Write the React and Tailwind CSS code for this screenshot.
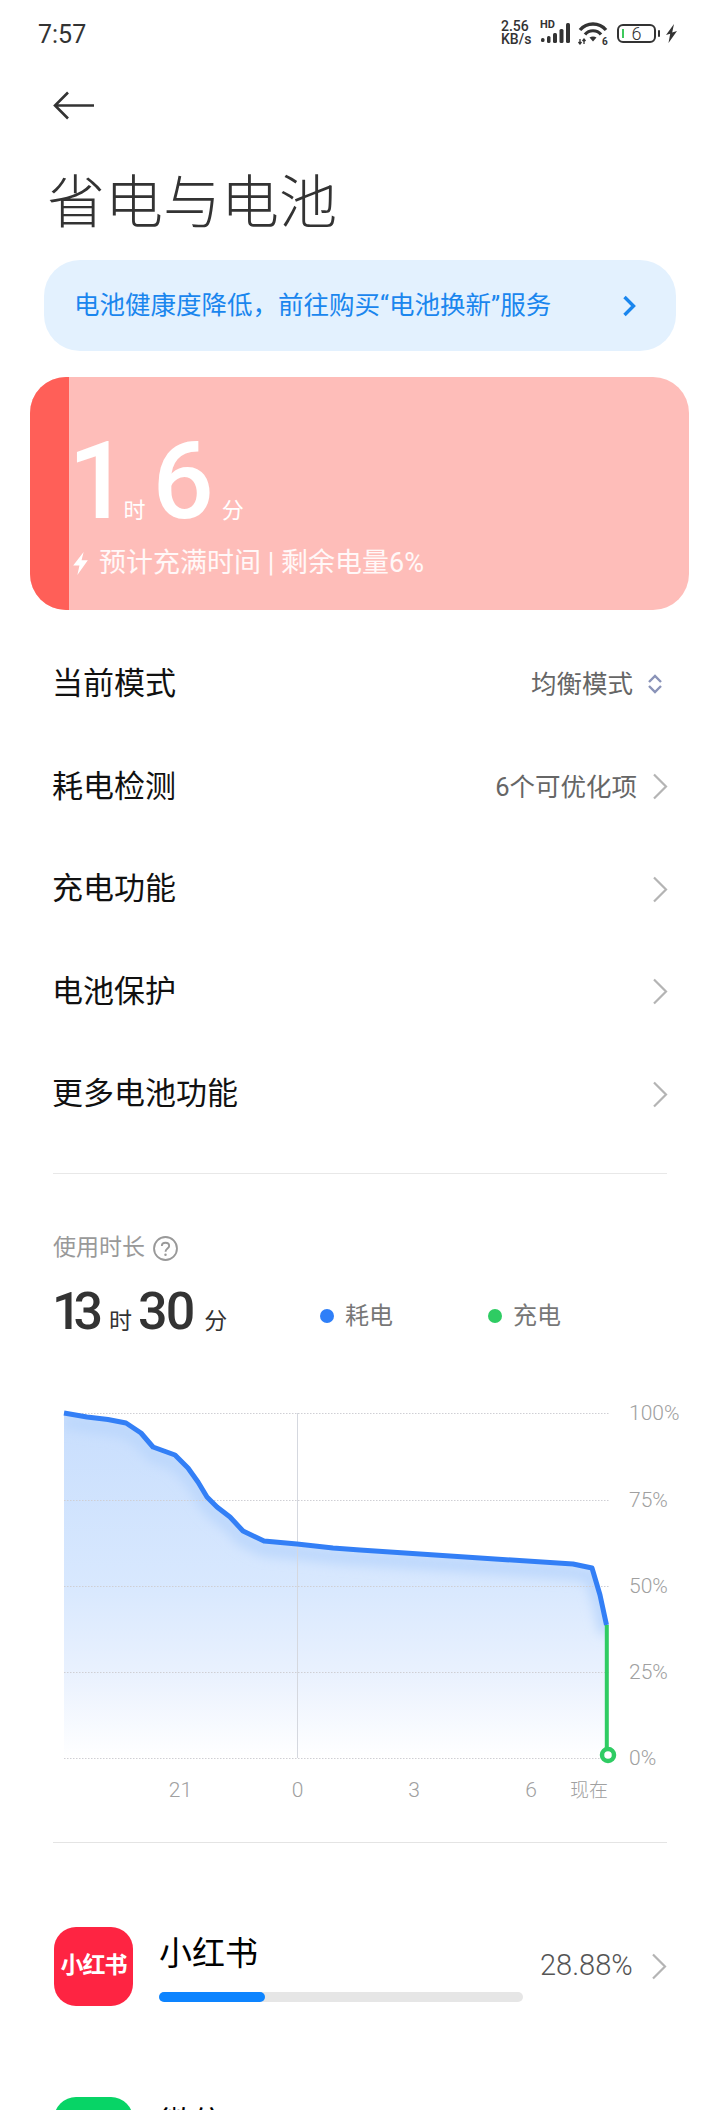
import React from 'react';

const drainPoints = [
  [64, 1413], [87, 1417], [108, 1419.5], [126, 1423], [141, 1433], [153, 1447], [175, 1455],
  [188, 1468], [198, 1482], [207, 1497], [217, 1507], [230, 1517], [243, 1531], [264, 1541],
  [297, 1544], [333, 1548], [360, 1550], [480, 1558], [573, 1564], [592, 1568], [600, 1595], [606.5, 1625],
];
const CHART_TOP = 1400;
const linePath = drainPoints.map(([x, y], i) => `${i === 0 ? 'M' : 'L'}${x} ${y - CHART_TOP}`).join(' ');
const areaPath = `${linePath} L606.5 ${1758 - CHART_TOP} L64 ${1758 - CHART_TOP} Z`;

const gridLines = [
  { y: 13, label: '100%' },
  { y: 100, label: '75%' },
  { y: 186, label: '50%' },
  { y: 272, label: '25%' },
  { y: 358, label: '0%' },
];
const hourLabels = [
  { x: 180.5, label: '21' },
  { x: 297.5, label: '0' },
  { x: 414, label: '3' },
  { x: 531, label: '6' },
  { x: 589, label: '现在' },
];

const ChevronRight = () => (
  <svg width="16" height="27" viewBox="0 0 16 27" fill="none" className="shrink-0">
    <path d="M2 1.5 L14 13.5 L2 25.5" stroke="#b4b4b4" strokeWidth="2.2" />
  </svg>
);

const MenuRow = ({ title, value, updown }) => (
  <div className="h-[102.5px] flex items-center justify-between pl-[52px]">
    <span className="text-[31px] text-[#111]">{title}</span>
    <div className="flex items-center">
      {value && <span className="text-[25.5px] text-[#666]">{value}</span>}
      {updown ? (
        <svg width="16" height="20" viewBox="0 0 16 20" fill="none" className="ml-[14px] mr-[57px]">
          <path d="M2 8 L8 2 L14 8 M2 12 L8 18 L14 12" stroke="#8a93b8" strokeWidth="2.4" />
        </svg>
      ) : (
        <div className="ml-[15px] mr-[52px]">
          <ChevronRight />
        </div>
      )}
    </div>
  </div>
);

const AppRow = ({ name, color, icon, percent, barWidth }) => (
  <div className="h-[170px] flex pl-[54px]">
    <div
      className="w-[79px] h-[79px] rounded-[22px] flex items-center justify-center text-white text-[23px] font-bold tracking-[-1px] shrink-0"
      style={{ backgroundColor: color }}
    >
      {icon}
    </div>
    <div className="ml-[26px] w-[364px]">
      <div className="h-[65px] pt-[4px] text-[33px] leading-[46px] text-black">{name}</div>
      {barWidth && (
        <div className="h-[10px] rounded-full bg-[#e6e6e6]">
          <div className="h-[10px] rounded-full bg-[#0d84ff]" style={{ width: barWidth }} />
        </div>
      )}
    </div>
    {percent && (
      <div className="ml-[17px] h-[79px] flex items-center">
        <span className="w-[111px] text-[29px] font-light text-[#555]">{percent}</span>
        <ChevronRight />
      </div>
    )}
  </div>
);

const StatusIcons = () => (
  <div className="flex items-center text-[#333]">
    <div className="w-[36px] text-[14px] leading-[13px] font-medium">
      <div>2.56</div>
      <div>KB/s</div>
    </div>
    <div className="relative w-[32px] h-[22px] ml-[3px]">
      <span className="absolute left-0 top-[-2px] text-[11px] leading-[10px] font-bold">HD</span>
      <svg width="32" height="22" viewBox="0 0 32 22" fill="currentColor">
        <rect x="1" y="16" width="3.5" height="4" rx="1.5" />
        <rect x="7" y="14" width="3.5" height="7" rx="1.5" />
        <rect x="13" y="11" width="4" height="10" rx="1.5" />
        <rect x="19.5" y="7" width="4" height="14" rx="1.5" />
        <rect x="26" y="1" width="4" height="20" rx="1.5" />
      </svg>
    </div>
    <svg width="32" height="24" viewBox="0 0 32 24" fill="none" className="ml-[5px]">
      <path d="M3 9 C10 1 22 1 29 9" stroke="currentColor" strokeWidth="3.4" />
      <path d="M8 13.5 C12 8.5 20 8.5 24 13.5" stroke="currentColor" strokeWidth="3.2" />
      <path d="M16 20.5 L12.5 16.5 C14.5 15 17.5 15 19.5 16.5 Z" fill="currentColor" />
      <path d="M3 18 V23 M1.5 21 L3 23 L4.5 21 M7 23 V18 M5.5 20 L7 18 L8.5 20" stroke="currentColor" strokeWidth="1.3" />
      <text x="25" y="23.5" fontSize="10" fontWeight="700" fill="currentColor">6</text>
    </svg>
    <div className="relative ml-[8px] w-[39px] h-[19px] rounded-[6px] border-2 border-[#333] flex items-center justify-center text-[18px] font-light">
      <span className="absolute left-[3px] top-[3px] w-[1.5px] h-[9px] bg-[#3ec95c]" />
      6
    </div>
    <div className="ml-[2px] w-[2px] h-[7px] rounded-full bg-[#333]" />
    <svg width="13" height="19" viewBox="0 0 13 19" fill="currentColor" className="ml-[5px]">
      <path d="M9 0 L1 11 L5.2 9.8 L3.5 19 L12 7 L7.2 8.4 Z" />
    </svg>
  </div>
);

const UsageChart = () => (
  <svg width="720" height="410" viewBox="0 0 720 410" className="block">
    <defs>
      <linearGradient id="areaFill" x1="0" y1="13" x2="0" y2="358" gradientUnits="userSpaceOnUse">
        <stop offset="0" stopColor="#c8defd" />
        <stop offset="0.5" stopColor="#d8e8fe" />
        <stop offset="0.75" stopColor="#e9f1fe" />
        <stop offset="1" stopColor="#ffffff" />
      </linearGradient>
      <clipPath id="areaClip">
        <path d={areaPath} />
      </clipPath>
      <filter id="softGlow" x="-10%" y="-10%" width="120%" height="120%">
        <feGaussianBlur stdDeviation="6" />
      </filter>
    </defs>
    <path d={areaPath} fill="url(#areaFill)" />
    <g clipPath="url(#areaClip)">
      <path d={linePath} transform="translate(0 8)" fill="none" stroke="#bcd7fc" strokeWidth="14" filter="url(#softGlow)" />
    </g>
    {gridLines.map((g) => (
      <g key={g.label}>
        <line x1="64" x2="609" y1={g.y + 0.5} y2={g.y + 0.5} stroke="#cfcfd4" strokeDasharray="1.5 1.5" />
        <text x="629" y={g.y + 6.5} fontSize="21" fontWeight="300" fill="#a0a0a0">{g.label}</text>
      </g>
    ))}
    <line x1="297.5" x2="297.5" y1="13" y2="358" stroke="#d5d8df" />
    <path d={linePath} fill="none" stroke="#337ff6" strokeWidth="5" strokeLinejoin="round" />
    <line x1="606.8" x2="606.8" y1="225" y2="350" stroke="#2fcc63" strokeWidth="4" />
    <circle cx="608" cy="355" r="6" fill="#fff" stroke="#2fcc63" strokeWidth="4.5" />
    {hourLabels.map((h) => (
      <text key={h.label} x={h.x} y="397" textAnchor="middle" fontSize={h.label === '现在' ? 19 : 21} fontWeight="300" fill="#a0a0a0">
        {h.label}
      </text>
    ))}
  </svg>
);

export default function App() {
  return (
    <div className="w-[720px] h-[2110px] overflow-hidden bg-white font-[Roboto,'Noto_Sans_CJK_SC',sans-serif]">
      <div className="h-[68px] pl-[38px] pr-[42px] pt-[21px] flex items-start justify-between">
        <span className="text-[25px] leading-[28px] text-[#333]">7:57</span>
        <div className="-mt-[1px]">
          <StatusIcons />
        </div>
      </div>

      <svg width="44" height="29" viewBox="0 0 44 29" fill="none" className="block mt-[23px] ml-[52px]">
        <path d="M42 14.5 H3 M16 1.5 L3 14.5 L16 27.5" stroke="#333" strokeWidth="2.6" />
      </svg>

      <h1 className="mt-[51px] ml-[47px] h-[64px] text-[58px] leading-[64px] font-light text-[#333]">省电与电池</h1>

      <div className="mt-[25px] ml-[44px] w-[632px] h-[91px] rounded-[36px] bg-[#e3f1fe] flex items-center justify-between pl-[30px] pr-[40px]">
        <span className="text-[25.5px] text-[#1a86ee]">电池健康度降低，前往购买“电池换新”服务</span>
        <svg width="14" height="22" viewBox="0 0 14 22" fill="none">
          <path d="M2.5 2 L11.5 11 L2.5 20" stroke="#1a86ee" strokeWidth="3.4" />
        </svg>
      </div>

      <div className="mt-[26px] ml-[30px] w-[659px] h-[233px] rounded-[36px] overflow-hidden flex bg-[#febdb9]">
        <div className="w-[39px] bg-[#ff5f58]" />
        <div className="pl-[6px] text-white">
          <div className="mt-[52px] h-[106px] flex items-baseline">
            <span className="-ml-[7px] text-[108px] leading-[104px] font-medium">1</span>
            <span className="-ml-[6px] text-[22px]">时</span>
            <span className="ml-[7px] text-[108px] leading-[104px] font-medium">6</span>
            <span className="ml-[8px] text-[22px]">分</span>
          </div>
          <div className="mt-[10px] flex items-center text-white/90">
            <svg width="17" height="23" viewBox="0 0 16 22" fill="white" className="mr-[10px] -ml-[3px]">
              <path d="M11 0 L1 13 H7 L5 22 L15 8 H9 Z" />
            </svg>
            <span className="text-[27px] leading-[36px]">预计充满时间 | 剩余电量6%</span>
          </div>
        </div>
      </div>

      <div className="mt-[23px]">
        <MenuRow title="当前模式" value="均衡模式" updown />
        <MenuRow title="耗电检测" value="6个可优化项" />
        <MenuRow title="充电功能" />
        <MenuRow title="电池保护" />
        <MenuRow title="更多电池功能" />
      </div>

      <div className="mt-[27px] mx-[53px] h-px bg-[#e8e8e8]" />

      <div className="mt-[62px] ml-[53px] h-[26px] flex items-center text-[23px] text-[#999]">
        <span>使用时长</span>
        <svg width="25" height="25" viewBox="0 0 24 24" fill="none" className="ml-[8px]">
          <circle cx="12" cy="12" r="11" stroke="#999" strokeWidth="1.8" />
          <path d="M8.5 9.5 C8.5 5.5 15.5 5.5 15.5 9.5 C15.5 12 12 12 12 15" stroke="#999" strokeWidth="1.8" />
          <circle cx="12" cy="18" r="1.2" fill="#999" />
        </svg>
      </div>

      <div className="mt-[25px] ml-[52px] h-[52px] flex items-center">
        <div className="w-[268px] flex items-baseline text-[#333]">
          <span className="text-[52px] leading-[52px] font-medium tracking-[-8px]">13</span>
          <span className="ml-[14px] text-[23px]">时</span>
          <span className="ml-[6px] text-[52px] leading-[52px] font-medium tracking-[-2px]">30</span>
          <span className="ml-[11px] text-[23px]">分</span>
        </div>
        <div className="w-[168px] mt-[6px] flex items-center">
          <span className="w-[14px] h-[14px] rounded-full bg-[#2f7ff8]" />
          <span className="ml-[11px] text-[24px] text-[#777]">耗电</span>
        </div>
        <div className="mt-[6px] flex items-center">
          <span className="w-[14px] h-[14px] rounded-full bg-[#2ecc63]" />
          <span className="ml-[11px] text-[24px] text-[#777]">充电</span>
        </div>
      </div>

      <div className="mt-[61px]">
        <UsageChart />
      </div>

      <div className="mt-[32px] mx-[53px] h-px bg-[#e4e4e4]" />

      <div className="mt-[84px]">
        <AppRow name="小红书" color="#fe2442" icon="小红书" percent="28.88%" barWidth="106px" />
        <AppRow name="微信" color="#07d466" />
      </div>
    </div>
  );
}
